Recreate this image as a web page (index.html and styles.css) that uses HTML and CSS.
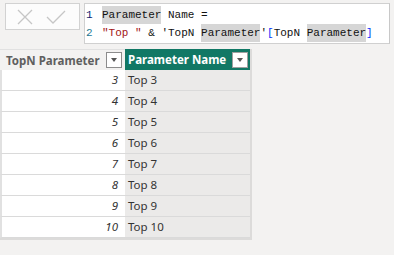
FILE: index.html
```html
<!DOCTYPE html>
<html lang="en">
<head>
    <meta charset="UTF-8">
    <title>TopN Parameter</title>
    <link rel="stylesheet" href="styles.css">
</head>
<body>

    <div class="topbar">
        <div class="commit-box">
            <svg class="icon" width="16" height="16" viewBox="0 0 16 16">
                <path d="M1 1 L15 15 M15 1 L1 15" stroke="#c6c6c6" stroke-width="1.3" fill="none"/>
            </svg>
            <svg class="icon" width="20" height="14" viewBox="0 0 20 14">
                <path d="M1 7 L7 13 L19 1" stroke="#c6c6c6" stroke-width="1.3" fill="none"/>
            </svg>
        </div>

        <div class="editor">
<div class="line"><span class="num current">1</span><span class="hl">Parameter</span> Name =</div>
<div class="line"><span class="num">2</span><span class="str">"Top "</span> &amp; 'TopN <span class="hl">Parameter</span>'<span class="br">[</span>TopN <span class="hl">Parameter</span><span class="br">]</span></div>
        </div>
    </div>

    <div class="grid">
        <div class="head head-plain">
            <span>TopN Parameter</span>
            <span class="filter"></span>
        </div>
        <div class="head head-active">
            <span>Parameter Name</span>
            <span class="filter"></span>
        </div>

        <div class="cell val">3</div><div class="cell name">Top 3</div>
        <div class="cell val">4</div><div class="cell name">Top 4</div>
        <div class="cell val">5</div><div class="cell name">Top 5</div>
        <div class="cell val">6</div><div class="cell name">Top 6</div>
        <div class="cell val">7</div><div class="cell name">Top 7</div>
        <div class="cell val">8</div><div class="cell name">Top 8</div>
        <div class="cell val">9</div><div class="cell name">Top 9</div>
        <div class="cell val">10</div><div class="cell name">Top 10</div>
    </div>

</body>
</html>
```

FILE: styles.css
```css
body {
    margin: 0;
    padding: 0;
    background-color: #f3f2f1;
    font-family: 'Noto Sans', sans-serif;
    font-size: 11.5px;
    color: #333;
}

.topbar {
    display: flex;
    height: 44px;
    padding-top: 3px;
    box-sizing: border-box;
}

.commit-box {
    margin-left: 5px;
    width: 75px;
    height: 27px;
    box-sizing: border-box;
    border: 1px solid #d2d2d2;
    background-color: #fcfcfc;
    display: flex;
    align-items: center;
    padding-left: 11px;
    gap: 13px;
}

.editor {
    margin-left: 4px;
    width: 306px;
    height: 41px;
    box-sizing: border-box;
    border: 1px solid #d0d0d0;
    border-right-color: #c8c8c8;
    background-color: white;
    padding-top: 2px;
    font-family: 'Liberation Mono', monospace;
    font-size: 11px;
    color: #111;
}

.line {
    height: 18px;
    line-height: 18px;
    white-space: pre;
}

.num {
    display: inline-block;
    width: 16px;
    padding-left: 1px;
    color: #237893;
}

.num.current {
    color: #0b216f;
}

.hl {
    display: inline-block;
    height: 18px;
    vertical-align: top;
    background-color: #d6d6d6;
}

.str {
    color: #a31515;
}

.br {
    color: #0431fa;
}

.grid {
    margin-top: 5px;
    display: grid;
    grid-template-columns: 125px 125px;
    width: 250px;
    border-right: 2px solid #dcdbda;
    border-bottom: 2px solid #dcdbda;
}

.head {
    height: 21px;
    box-sizing: border-box;
    display: flex;
    align-items: center;
    justify-content: space-between;
    padding: 0 3px 0 6px;
    font-weight: bold;
}

.head-plain {
    background-color: #f3f2f1;
    color: #5f5f5f;
    border-top: 1px solid #e1e1e1;
}

.head-active {
    background-color: #117865;
    color: white;
    padding-left: 3px;
    padding-right: 2px;
}

.filter {
    width: 16px;
    height: 16px;
    box-sizing: border-box;
    border: 1px solid #8c8c8c;
    background-color: white;
    position: relative;
}

.filter::after {
    content: '';
    position: absolute;
    left: 4px;
    top: 5px;
    border-left: 3px solid transparent;
    border-right: 3px solid transparent;
    border-top: 4px solid #555;
}

.head-active .filter {
    border-color: #a0a0a0;
}

.cell {
    height: 21px;
    line-height: 20px;
    box-sizing: border-box;
    border-bottom: 1px solid #dadada;
}

.val {
    background-color: white;
    border-left: 2px solid #e1e1e1;
    text-align: right;
    font-style: italic;
    padding-right: 7px;
}

.name {
    background-color: #ebeae9;
    padding-left: 3px;
}
```
